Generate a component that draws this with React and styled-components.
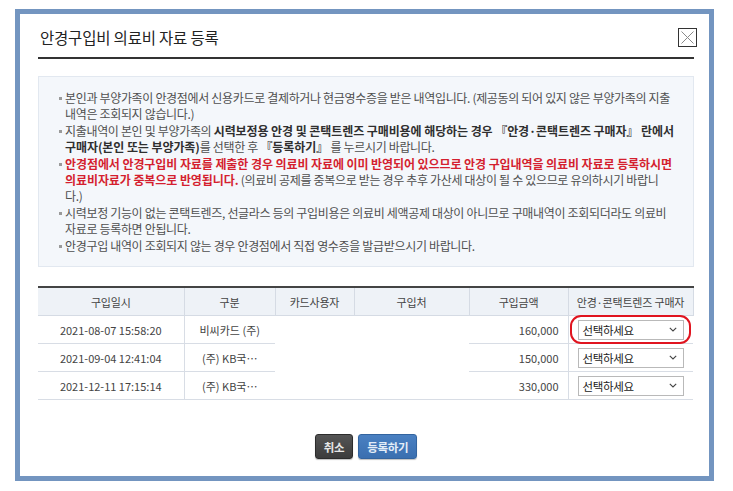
import React from 'react'
import styled, { createGlobalStyle } from 'styled-components'

const GlobalStyle = createGlobalStyle`
  html, body {
    margin: 0;
    padding: 0;
    background: #ffffff;
  }
  body {
    font-family: "Noto Sans CJK KR", "Noto Sans", sans-serif;
    color: #444;
  }
`

const Page = styled.div`
  width: 733px;
  height: 491px;
  padding: 9px 0 0 15px;
  box-sizing: border-box;
`

const Modal = styled.div`
  width: 699px;
  height: 472px;
  box-sizing: border-box;
  border: 5px solid #7395c0;
  background: #fff;
  padding: 0 15px 0 18px;
  display: flex;
  flex-direction: column;
`

const Header = styled.div`
  display: flex;
  align-items: center;
  justify-content: space-between;
  height: 45px;
  box-sizing: border-box;
  padding-top: 3px;
  border-bottom: 2px solid #333;
`

const Title = styled.h1`
  margin: 0 0 0 2px;
  font-size: 15.5px;
  font-weight: 400;
  color: #222;
  letter-spacing: -0.2px;
`

const CloseButton = styled.button`
  width: 19px;
  height: 19px;
  padding: 0;
  margin-right: -3px;
  border: 1px solid #333;
  background: #fff;
  display: flex;
  align-items: center;
  justify-content: center;
  cursor: pointer;
`

const InfoBox = styled.ul`
  margin: 17px 0 0 0;
  padding: 13px 20px 12px 20px;
  list-style: none;
  background: #f4f7fb;
  border: 1px solid #e2e8f0;
  font-size: 12px;
  line-height: 16.4px;
  letter-spacing: -0.33px;
  color: #4f4f4f;
`

const InfoItem = styled.li`
  display: flex;
  white-space: nowrap;
`

const Marker = styled.span`
  flex: none;
  width: 3px;
  height: 3px;
  margin: 7px 3px 0 0;
  background: #9a9a9a;
`

const Strong = styled.b`
  font-weight: 700;
  letter-spacing: -0.08px;
  color: ${p => (p.$red ? '#d41f2f' : '#2f2f2f')};
`

const Table = styled.table`
  margin-top: 19px;
  width: 655px;
  border-collapse: collapse;
  table-layout: fixed;
  border-top: 2px solid #444;
  font-size: 11px;
  color: #444;
`

const HeadCell = styled.th`
  height: 27px;
  padding: 0;
  font-weight: 400;
  background: #eef2f7;
  border-right: 1px solid #d5dbe4;
  border-bottom: 1px solid #d5dbe4;
  letter-spacing: -0.2px;
`

const Cell = styled.td`
  height: 27px;
  padding: ${p => (p.$align === 'right' ? '0 9px 0 0' : '0')};
  text-align: ${p => p.$align || 'center'};
  border-bottom: 1px solid #d8dde5;
  border-right: ${p => (p.$divider ? '1px solid #d8dde5' : 'none')};
  position: relative;
`

const MergedCell = styled.td`
  border-bottom: 1px solid #d8dde5;
  padding: 0;
`

const SelectBox = styled.div`
  width: 106px;
  height: 20px;
  margin-left: 9px;
  box-sizing: border-box;
  border: 1px solid #b9b9b9;
  background: #fff;
  display: flex;
  align-items: center;
  justify-content: space-between;
  padding: 0 6px 0 4px;
  font-size: 11.5px;
  color: #222;
  letter-spacing: -0.3px;
`

const Highlight = styled.span`
  position: absolute;
  left: 1px;
  top: -1px;
  width: 121px;
  height: 29px;
  box-sizing: border-box;
  border: 2px solid #e0141f;
  border-radius: 11px;
  pointer-events: none;
`

const Actions = styled.div`
  display: flex;
  justify-content: center;
  gap: 5px;
  margin-top: 34px;
`

const Button = styled.button`
  height: 25px;
  padding: 0 8px;
  border-radius: 3px;
  font-family: inherit;
  font-size: 11.5px;
  font-weight: 700;
  letter-spacing: -0.3px;
  border: 1px solid ${p => (p.$primary ? '#33649f' : '#2c2c2c')};
  color: ${p => (p.$primary ? '#e4edf8' : '#e6e6e6')};
  background: ${p =>
    p.$primary
      ? 'linear-gradient(#4a80c2, #3a6fb0)'
      : 'linear-gradient(#555, #3c3c3c)'};
  box-shadow: 0 1px 1px rgba(0, 0, 0, 0.25);
  cursor: pointer;
`

const Chevron = () => (
  <svg width="8" height="5" viewBox="0 0 8 5" fill="none">
    <path d="M0.8 0.8 L4 4 L7.2 0.8" stroke="#444" strokeWidth="1.1" />
  </svg>
)

const rows = [
  { date: '2021-08-07 15:58:20', kind: '비씨카드 (주)', amount: '160,000' },
  { date: '2021-09-04 12:41:04', kind: '(주) KB국…', amount: '150,000' },
  { date: '2021-12-11 17:15:14', kind: '(주) KB국…', amount: '330,000' },
]

const columns = [
  ['구입일시', 146],
  ['구분', 91],
  ['카드사용자', 79],
  ['구입처', 115],
  ['구입금액', 99],
  ['안경·콘택트렌즈 구매자', 125],
]

export default function App() {
  return (
    <Page>
      <GlobalStyle />
      <Modal>
        <Header>
          <Title>안경구입비 의료비 자료 등록</Title>
          <CloseButton aria-label="닫기">
            <svg width="15" height="15" viewBox="0 0 15 15">
              <path d="M1.5 1.5 L13.5 13.5 M13.5 1.5 L1.5 13.5" stroke="#8a8a8a" strokeWidth="1" />
            </svg>
          </CloseButton>
        </Header>

        <InfoBox>
          <InfoItem>
            <Marker />
            <span>
              본인과 부양가족이 안경점에서 신용카드로 결제하거나 현금영수증을 받은 내역입니다. (제공동의 되어 있지 않은 부양가족의 지출
              <br />
              내역은 조회되지 않습니다.)
            </span>
          </InfoItem>
          <InfoItem>
            <Marker />
            <span>
              지출내역이 본인 및 부양가족의 <Strong>시력보정용 안경 및 콘택트렌즈 구매비용에 해당하는 경우 『안경·콘택트렌즈 구매자』 란에서</Strong>
              <br />
              <Strong>구매자(본인 또는 부양가족)</Strong>를 선택한 후 <Strong>『등록하기』</Strong> 를 누르시기 바랍니다.
            </span>
          </InfoItem>
          <InfoItem>
            <Marker />
            <span>
              <Strong $red>안경점에서 안경구입비 자료를 제출한 경우 의료비 자료에 이미 반영되어 있으므로 안경 구입내역을 의료비 자료로 등록하시면</Strong>
              <br />
              <Strong $red>의료비자료가 중복으로 반영됩니다.</Strong> (의료비 공제를 중복으로 받는 경우 추후 가산세 대상이 될 수 있으므로 유의하시기 바랍니
              <br />
              다.)
            </span>
          </InfoItem>
          <InfoItem>
            <Marker />
            <span>
              시력보정 기능이 없는 콘택트렌즈, 선글라스 등의 구입비용은 의료비 세액공제 대상이 아니므로 구매내역이 조회되더라도 의료비
              <br />
              자료로 등록하면 안됩니다.
            </span>
          </InfoItem>
          <InfoItem>
            <Marker />
            <span>안경구입 내역이 조회되지 않는 경우 안경점에서 직접 영수증을 발급받으시기 바랍니다.</span>
          </InfoItem>
        </InfoBox>

        <Table>
          <colgroup>
            {columns.map(([name, width]) => (
              <col key={name} style={{ width }} />
            ))}
          </colgroup>
          <thead>
            <tr>
              {columns.map(([name]) => (
                <HeadCell key={name}>{name}</HeadCell>
              ))}
            </tr>
          </thead>
          <tbody>
            {rows.map((row, i) => (
              <tr key={row.date}>
                <Cell $divider>{row.date}</Cell>
                <Cell>{row.kind}</Cell>
                {i === 0 && (
                  <>
                    <MergedCell rowSpan={3} />
                    <MergedCell rowSpan={3} />
                  </>
                )}
                <Cell $align="right" $divider>{row.amount}</Cell>
                <Cell $align="left">
                  <SelectBox>
                    <span>선택하세요</span>
                    <Chevron />
                  </SelectBox>
                  {i === 0 && <Highlight />}
                </Cell>
              </tr>
            ))}
          </tbody>
        </Table>

        <Actions>
          <Button>취소</Button>
          <Button $primary>등록하기</Button>
        </Actions>
      </Modal>
    </Page>
  )
}
